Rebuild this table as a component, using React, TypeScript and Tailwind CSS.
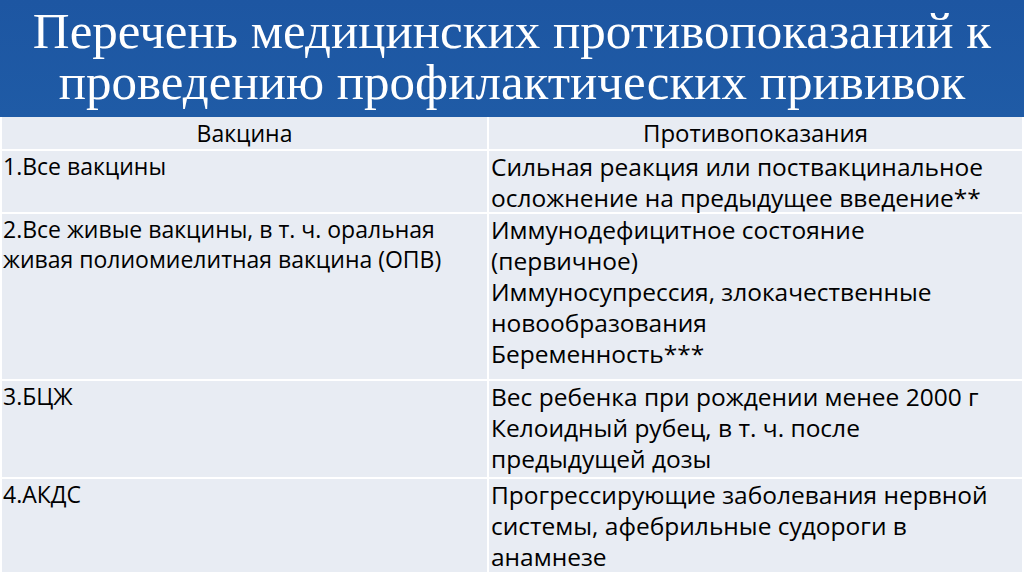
import React from "react";

const rows = [
  {
    vaccine: ["1.Все вакцины"],
    contra: ["Сильная реакция или поствакцинальное", "осложнение на предыдущее введение**"],
    h: "h-[61px]",
  },
  {
    vaccine: ["2.Все живые вакцины, в т. ч. оральная", "живая полиомиелитная вакцина (ОПВ)"],
    contra: [
      "Иммунодефицитное состояние",
      "(первичное)",
      "Иммуносупрессия, злокачественные",
      "новообразования",
      "Беременность***",
    ],
    h: "h-[165px]",
  },
  {
    vaccine: ["3.БЦЖ"],
    contra: ["Вес ребенка при рождении менее 2000 г", "Келоидный рубец, в т. ч. после", "предыдущей дозы"],
    h: "h-[96px]",
  },
  {
    vaccine: ["4.АКДС"],
    contra: ["Прогрессирующие заболевания нервной", "системы, афебрильные судороги в", "анамнезе"],
    h: "h-[93px]",
  },
];

function App() {
  return (
    <div className="w-[1024px] h-[574px] overflow-hidden bg-white flex flex-col">
      <div className="h-[117px] shrink-0 bg-gradient-to-b from-[#1d56a2] to-[#1f5ba6] flex flex-col items-center justify-center">
        <h1 className="text-white text-[51px] leading-[51px] text-center font-['Liberation_Serif',serif] pb-[3px]">
          Перечень медицинских противопоказаний к
          <br />
          проведению профилактических прививок
        </h1>
      </div>
      <div className="flex-1 bg-white px-[2px] font-['Open_Sans',sans-serif] text-black">
        <div className="flex h-[32px] gap-[2px]">
          <div className="w-[485px] bg-[#e8ecf3] text-center text-[23px] leading-[32px]">Вакцина</div>
          <div className="flex-1 bg-[#e8ecf3] text-center text-[24px] leading-[32px]">Противопоказания</div>
        </div>
        {rows.map((r, i) => (
          <div key={i} className={`flex gap-[2px] mt-[2px] ${r.h}`}>
            <div className="w-[485px] bg-[#e8ecf3] pl-[1px] text-[23px] leading-[30px]">
              {r.vaccine.map((l) => (
                <div key={l}>{l}</div>
              ))}
            </div>
            <div className="flex-1 bg-[#e8ecf3] pl-[2px] text-[24.5px] leading-[31px]">
              {r.contra.map((l) => (
                <div key={l}>{l}</div>
              ))}
            </div>
          </div>
        ))}
      </div>
    </div>
  );
}

export default App;
